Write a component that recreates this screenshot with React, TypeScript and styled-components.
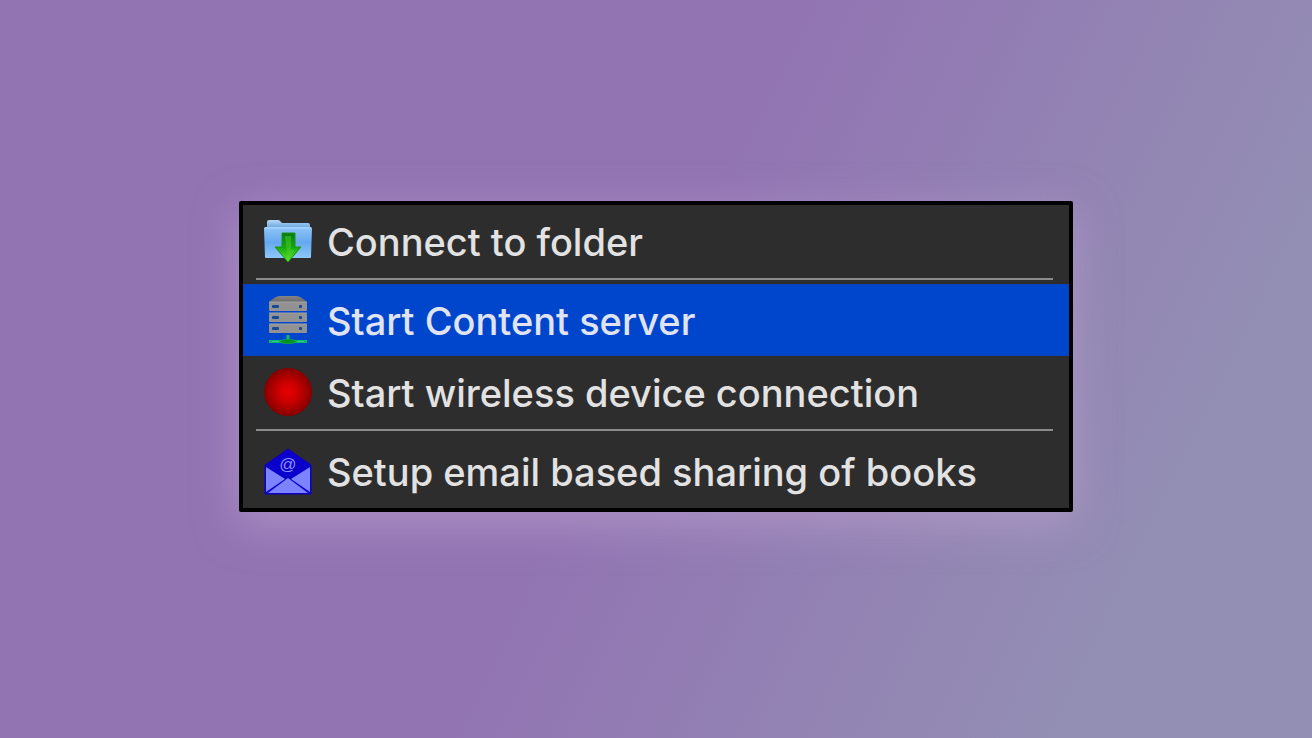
import React from "react";
import styled, { createGlobalStyle } from "styled-components";

const GlobalStyle = createGlobalStyle`
  *, *::before, *::after { box-sizing: border-box; }
  body { margin: 0; background: #9274b3; }
`;

const Page = styled.main`
  min-height: 100vh;
  display: flex;
  align-items: center;
  justify-content: center;
  padding: 24px 24px 49px;
  background: linear-gradient(116deg, #9274b3 48%, #938fb4 86%);
`;

const Menu = styled.div`
  width: 100%;
  max-width: 834px;
  padding-bottom: 1px;
  border: 4px solid #000;
  border-radius: 2px;
  background: #2d2d2d;
  box-shadow: 0 12px 44px rgba(190, 164, 208, 0.6);
`;

const MenuItem = styled.button<{ $active?: boolean }>`
  display: flex;
  align-items: center;
  gap: 15px;
  width: 100%;
  height: 72px;
  padding: 0 21px;
  border: 0;
  background: ${(p) => (p.$active ? "#0046cd" : "transparent")};
  box-shadow: ${(p) => (p.$active ? "inset 0 0 2px #1c3c8c" : "none")};
  color: ${(p) => (p.$active ? "#e0e4f2" : "#e2e2e2")};
  font: 500 38px/48px Inter, "Liberation Sans", sans-serif;
  text-align: left;
  white-space: nowrap;
  cursor: default;
`;

const Label = styled.span`
  padding-top: 2px;
`;

const Divider = styled.hr`
  height: 2px;
  margin: 1px 16px 4px 13px;
  border: 0;
  background: #8b8b8b;
`;

const Icon = styled.svg`
  width: 48px;
  height: 48px;
  flex: none;
`;

const FolderIcon = () => (
  <Icon viewBox="0 0 48 48" aria-hidden="true">
    <defs>
      <linearGradient id="folderFront" x1="0" y1="0" x2="0" y2="1">
        <stop offset="0" stopColor="#8fc5fa" />
        <stop offset="0.5" stopColor="#65a8ee" />
        <stop offset="1" stopColor="#8dc8fb" />
      </linearGradient>
      <linearGradient id="folderBack" x1="0" y1="0" x2="0" y2="1">
        <stop offset="0" stopColor="#b5d8f5" />
        <stop offset="1" stopColor="#5d9ede" />
      </linearGradient>
      <linearGradient id="arrowFill" x1="0" y1="0" x2="0" y2="1">
        <stop offset="0" stopColor="#067b13" />
        <stop offset="0.5" stopColor="#18a912" />
        <stop offset="1" stopColor="#5ee82d" />
      </linearGradient>
    </defs>
    <path d="M3 12V5q0-2 2-2h9q2 0 3 2l1 1h26q2 0 2 2v4z" fill="url(#folderBack)" />
    <path d="M0 11.500q0-1.500 1.500-1.500h45q1.500 0 1.500 1.500L47 40q0 1-1 1H2q-1 0-1-1z" fill="url(#folderFront)" />
    <path d="M1 11h46" stroke="#b4dafc" strokeWidth="1" />
    <path d="M18 16h13v14h6L24 45 11 30h7z" fill="url(#arrowFill)" stroke="#189414" strokeWidth="1" strokeLinejoin="round" />
    <path d="M21 19h6v14h4l-7 9z" fill="#53d42b" opacity="0.45" />
  </Icon>
);

const ServerIcon = () => (
  <Icon viewBox="0 0 48 48" aria-hidden="true">
    <defs>
      <linearGradient id="serverLid" x1="0" y1="0" x2="0" y2="1">
        <stop offset="0" stopColor="#858585" />
        <stop offset="1" stopColor="#696969" />
      </linearGradient>
      <radialGradient id="networkGlow">
        <stop offset="0" stopColor="#008a08" />
        <stop offset="0.6" stopColor="#079424" />
        <stop offset="1" stopColor="#09ae61" />
      </radialGradient>
    </defs>
    <path d="M5 6Q7 4 12 1q2-1 4-1h16q2 0 4 1 5 3 7 5z" fill="url(#serverLid)" />
    {[6, 17, 28].map((y) => (
      <g key={y}>
        <rect x="5" y={y} width="38" height="9" rx="1" fill="#929292" />
        <path d={`M5 ${y}h38`} stroke="#a3a3a3" strokeWidth="1" />
        <rect x="8" y={y + 3} width="7" height="3" rx="1" fill="#164a99" />
        <rect x="35" y={y + 3} width="3" height="3" rx="1" fill="#164a99" />
      </g>
    ))}
    <path d="M24 39v5" stroke="#12b968" strokeWidth="3" />
    <path d="M5 45.500h38" stroke="#08b86d" strokeWidth="3" />
    <path d="M8 45.500h32" stroke="#35c888" strokeWidth="1" />
    <ellipse cx="24" cy="45.500" rx="9" ry="2.500" fill="url(#networkGlow)" />
  </Icon>
);

const RecordIcon = () => (
  <Icon viewBox="0 0 48 48" aria-hidden="true">
    <defs>
      <radialGradient id="redDot">
        <stop offset="0" stopColor="#e80000" />
        <stop offset="0.4" stopColor="#cc0000" />
        <stop offset="1" stopColor="#850000" />
      </radialGradient>
    </defs>
    <circle cx="24" cy="24" r="24" fill="url(#redDot)" />
  </Icon>
);

const MailIcon = () => (
  <Icon viewBox="0 0 48 48" aria-hidden="true">
    <path d="M1 18L24 2l23 16v29H1z" fill="#0b00cb" stroke="#1100b6" strokeWidth="1" strokeLinejoin="round" />
    <path d="M2 20l19 12L2 45zM46 20L27 32l19 13zM4 46l20-15 20 15z" fill="#7c83ff" />
    <text x="24" y="23" textAnchor="middle" fontFamily="Liberation Sans, sans-serif" fontSize="17" fill="#8b91ff">@</text>
  </Icon>
);

export default function App() {
  return (
    <>
      <GlobalStyle />
      <Page>
        <Menu role="menu" aria-label="Connect and share">
          <MenuItem type="button" role="menuitem"><FolderIcon /><Label>Connect to folder</Label></MenuItem>
          <Divider />
          <MenuItem type="button" role="menuitem" $active><ServerIcon /><Label>Start Content server</Label></MenuItem>
          <MenuItem type="button" role="menuitem"><RecordIcon /><Label>Start wireless device connection</Label></MenuItem>
          <Divider />
          <MenuItem type="button" role="menuitem"><MailIcon /><Label>Setup email based sharing of books</Label></MenuItem>
        </Menu>
      </Page>
    </>
  );
}
